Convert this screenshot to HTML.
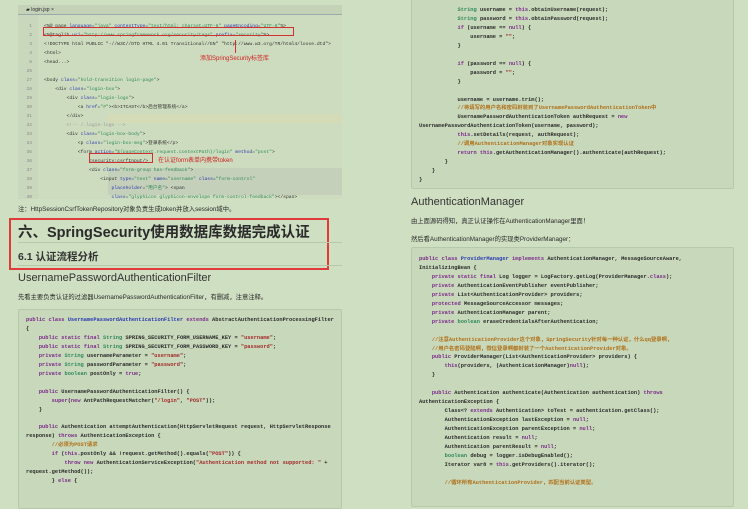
<!DOCTYPE html>
<html><head><meta charset="utf-8"><style>
*{margin:0;padding:0;box-sizing:border-box}
body{width:748px;height:497px;overflow:hidden;background:#cfdfc2;font-family:"Liberation Sans","Noto Sans CJK SC",sans-serif;color:#2a2a2a;position:relative}
.a{position:absolute;white-space:pre}
.ide{position:absolute;left:18px;top:5px;width:324px;height:194px;background:#cddcbf}
.tab{position:absolute;left:0;top:0;width:324px;height:10px;background:#c4d2b8;border-bottom:1px solid #9aa;font-size:5px;line-height:10px;padding-left:8px}
.ln{position:absolute;left:0;top:17px;width:20px;font:4.6px/9px "Liberation Mono",monospace;color:#888;text-align:right;padding-right:6px;white-space:pre}
.ic{position:absolute;left:26px;top:17px;font:4.7px/9px "Liberation Mono",monospace;color:#333;white-space:pre}
.box{position:absolute;background:#c8d8bb;border:1px solid #b8c8ab;border-radius:2px}
.code{position:absolute;font:bold 5.35px/8.95px "Liberation Mono","Noto Sans CJK SC",monospace;color:#2a2a2a;white-space:pre}
.k{color:#7b2a8a}.s{color:#a32a2a}.t{color:#2f8a5a}.c{color:#b07018}.n{color:#2a3ab0}
.red{color:#d02020}
</style></head><body>
<div class="ide">
<div class="tab">▰ login.jsp ×</div>
<div style="position:absolute;left:0;top:10px;width:20px;height:184px;background:#c9d8bc"></div>
<div style="position:absolute;left:90px;top:109px;width:234px;height:9px;background:#d5dbb6"></div>
<div style="position:absolute;left:90px;top:163px;width:234px;height:27px;background:#c4d0ba"></div>
<div class="ln">1
2
3
4
5
26
27
28
29
30
31
32
33
34
35
36
37
38
39
40</div>
<div class="ic">&lt;%@ page <span class="n">language</span>=<span class="t">"java"</span> <span class="n">contentType</span>=<span class="t">"text/html; charset=UTF-8"</span> <span class="n">pageEncoding</span>=<span class="t">"UTF-8"</span>%&gt;
&lt;%@taglib <span class="n">uri</span>=<span class="t">"http://www.springframework.org/security/tags"</span> <span class="n">prefix</span>=<span class="t">"security"</span>%&gt;
&lt;!DOCTYPE html PUBLIC "-//W3C//DTD HTML 4.01 Transitional//EN" "http://www.w3.org/TR/html4/loose.dtd"&gt;
&lt;html&gt;
&lt;head...&gt;

&lt;body <span class="n">class</span>=<span class="t">"hold-transition login-page"</span>&gt;
    &lt;div <span class="n">class</span>=<span class="t">"login-box"</span>&gt;
        &lt;div <span class="n">class</span>=<span class="t">"login-logo"</span>&gt;
            &lt;a <span class="n">href</span>=<span class="t">"#"</span>&gt;&lt;b&gt;ITCAST&lt;/b&gt;后台管理系统&lt;/a&gt;
        &lt;/div&gt;
        <span style="color:#999">&lt;!-- /.login-logo --&gt;</span>
        &lt;div <span class="n">class</span>=<span class="t">"login-box-body"</span>&gt;
            &lt;p <span class="n">class</span>=<span class="t">"login-box-msg"</span>&gt;登录系统&lt;/p&gt;
            &lt;form <span class="n">action</span>=<span class="t">"${pageContext.request.contextPath}/login"</span> <span class="n">method</span>=<span class="t">"post"</span>&gt;
                &lt;security:csrfInput/&gt;
                &lt;div <span class="n">class</span>=<span class="t">"form-group has-feedback"</span>&gt;
                    &lt;input <span class="n">type</span>=<span class="t">"text"</span> <span class="n">name</span>=<span class="t">"username"</span> <span class="n">class</span>=<span class="t">"form-control"</span>
                        <span class="n">placeholder</span>=<span class="t">"用户名"</span>&gt; &lt;span
                        <span class="n">class</span>=<span class="t">"glyphicon glyphicon-envelope form-control-feedback"</span>&gt;&lt;/span&gt;</div>
<div style="position:absolute;left:25px;top:22px;width:251px;height:9px;border:1px solid #d03030"></div>
<div style="position:absolute;left:71px;top:148px;width:64px;height:10px;border:1px solid #d03030"></div>
<div style="position:absolute;left:217px;top:35px;width:1px;height:13px;background:#d03030"></div>
<div class="a red" style="left:182px;top:48px;font-size:6px">添加SpringSecurity标签库</div>
<div class="a red" style="left:140px;top:150px;font-size:6px">在认证form表单内携带token</div>
</div>
<div class="a" style="left:18px;top:204px;font-size:6.3px">注：HttpSessionCsrfTokenRepository对象负责生成token并放入session域中。</div>
<div style="position:absolute;left:9px;top:218px;width:320px;height:52px;border:2px solid #e03a3a"></div>
<div class="a" style="left:18px;top:221px;font-size:14.5px;font-weight:bold;color:#2a2a2a">六、SpringSecurity使用数据库数据完成认证</div>
<div style="position:absolute;left:18px;top:242px;width:324px;height:1px;background:#b8c8ab"></div>
<div class="a" style="left:18px;top:249px;font-size:10.5px;font-weight:bold;color:#333">6.1 认证流程分析</div>
<div style="position:absolute;left:18px;top:265px;width:324px;height:1px;background:#b8c8ab"></div>
<div class="a" style="left:18px;top:272px;font-size:11px;color:#333">UsernamePasswordAuthenticationFilter</div>
<div class="a" style="left:18px;top:292px;font-size:6.3px">先看主要负责认证的过滤器UsernamePasswordAuthenticationFilter，有删减，注意注释。</div>
<div class="box" style="left:18px;top:309px;width:324px;height:200px"></div>
<div class="code" style="left:26px;top:316px"><span class="k">public class</span> <span class="n">UsernamePasswordAuthenticationFilter</span> <span class="k">extends</span> AbstractAuthenticationProcessingFilter
{
    <span class="k">public static final</span> <span class="t">String</span> SPRING_SECURITY_FORM_USERNAME_KEY = <span class="s">"username"</span>;
    <span class="k">public static final</span> <span class="t">String</span> SPRING_SECURITY_FORM_PASSWORD_KEY = <span class="s">"password"</span>;
    <span class="k">private</span> <span class="t">String</span> usernameParameter = <span class="s">"username"</span>;
    <span class="k">private</span> <span class="t">String</span> passwordParameter = <span class="s">"password"</span>;
    <span class="k">private</span> <span class="t">boolean</span> postOnly = <span class="k">true</span>;

    <span class="k">public</span> UsernamePasswordAuthenticationFilter() {
        <span class="k">super</span>(<span class="k">new</span> AntPathRequestMatcher(<span class="s">"/login"</span>, <span class="s">"POST"</span>));
    }

    <span class="k">public</span> Authentication attemptAuthentication(HttpServletRequest request, HttpServletResponse
response) <span class="k">throws</span> AuthenticationException {
        <span class="c">//必须为POST请求</span>
        <span class="k">if</span> (<span class="k">this</span>.postOnly &amp;&amp; !request.getMethod().equals(<span class="s">"POST"</span>)) {
            <span class="k">throw new</span> AuthenticationServiceException(<span class="s">"Authentication method not supported: "</span> +
request.getMethod());
        } <span class="k">else</span> {</div>

<div class="box" style="left:411px;top:-4px;width:323px;height:193px"></div>
<div class="code" style="left:419px;top:6px">            <span class="t">String</span> username = <span class="k">this</span>.obtainUsername(request);
            <span class="t">String</span> password = <span class="k">this</span>.obtainPassword(request);
            <span class="k">if</span> (username == <span class="k">null</span>) {
                username = <span class="s">""</span>;
            }

            <span class="k">if</span> (password == <span class="k">null</span>) {
                password = <span class="s">""</span>;
            }

            username = username.trim();
            <span class="c">//将填写的用户名和密码封装到了UsernamePasswordAuthenticationToken中</span>
            UsernamePasswordAuthenticationToken authRequest = <span class="k">new</span>
UsernamePasswordAuthenticationToken(username, password);
            <span class="k">this</span>.setDetails(request, authRequest);
            <span class="c">//调用AuthenticationManager对象实现认证</span>
            <span class="k">return this</span>.getAuthenticationManager().authenticate(authRequest);
        }
    }
}</div>
<div class="a" style="left:411px;top:196px;font-size:11px;color:#333">AuthenticationManager</div>
<div class="a" style="left:411px;top:216px;font-size:6.3px">由上面源码得知，真正认证操作在AuthenticationManager里面！</div>
<div class="a" style="left:411px;top:234px;font-size:6.3px">然后看AuthenticationManager的实现类ProviderManager：</div>
<div class="box" style="left:411px;top:247px;width:323px;height:260px"></div>
<div class="code" style="left:419px;top:255px"><span class="k">public class</span> <span class="n">ProviderManager</span> <span class="k">implements</span> AuthenticationManager, MessageSourceAware,
InitializingBean {
    <span class="k">private static final</span> Log logger = LogFactory.getLog(ProviderManager.<span class="k">class</span>);
    <span class="k">private</span> AuthenticationEventPublisher eventPublisher;
    <span class="k">private</span> List&lt;AuthenticationProvider&gt; providers;
    <span class="k">protected</span> MessageSourceAccessor messages;
    <span class="k">private</span> AuthenticationManager parent;
    <span class="k">private</span> <span class="t">boolean</span> eraseCredentialsAfterAuthentication;

    <span class="c">//注意AuthenticationProvider这个对象，SpringSecurity针对每一种认证，什么qq登录啊，</span>
    <span class="c">//用户名密码登陆啊，微信登录啊都封装了一个AuthenticationProvider对象。</span>
    <span class="k">public</span> ProviderManager(List&lt;AuthenticationProvider&gt; providers) {
        <span class="k">this</span>(providers, (AuthenticationManager)<span class="k">null</span>);
    }

    <span class="k">public</span> Authentication authenticate(Authentication authentication) <span class="k">throws</span>
AuthenticationException {
        Class&lt;? <span class="k">extends</span> Authentication&gt; toTest = authentication.getClass();
        AuthenticationException lastException = <span class="k">null</span>;
        AuthenticationException parentException = <span class="k">null</span>;
        Authentication result = <span class="k">null</span>;
        Authentication parentResult = <span class="k">null</span>;
        <span class="t">boolean</span> debug = logger.isDebugEnabled();
        Iterator var8 = <span class="k">this</span>.getProviders().iterator();

        <span class="c">//循环所有AuthenticationProvider，匹配当前认证类型。</span></div>
</body></html>
